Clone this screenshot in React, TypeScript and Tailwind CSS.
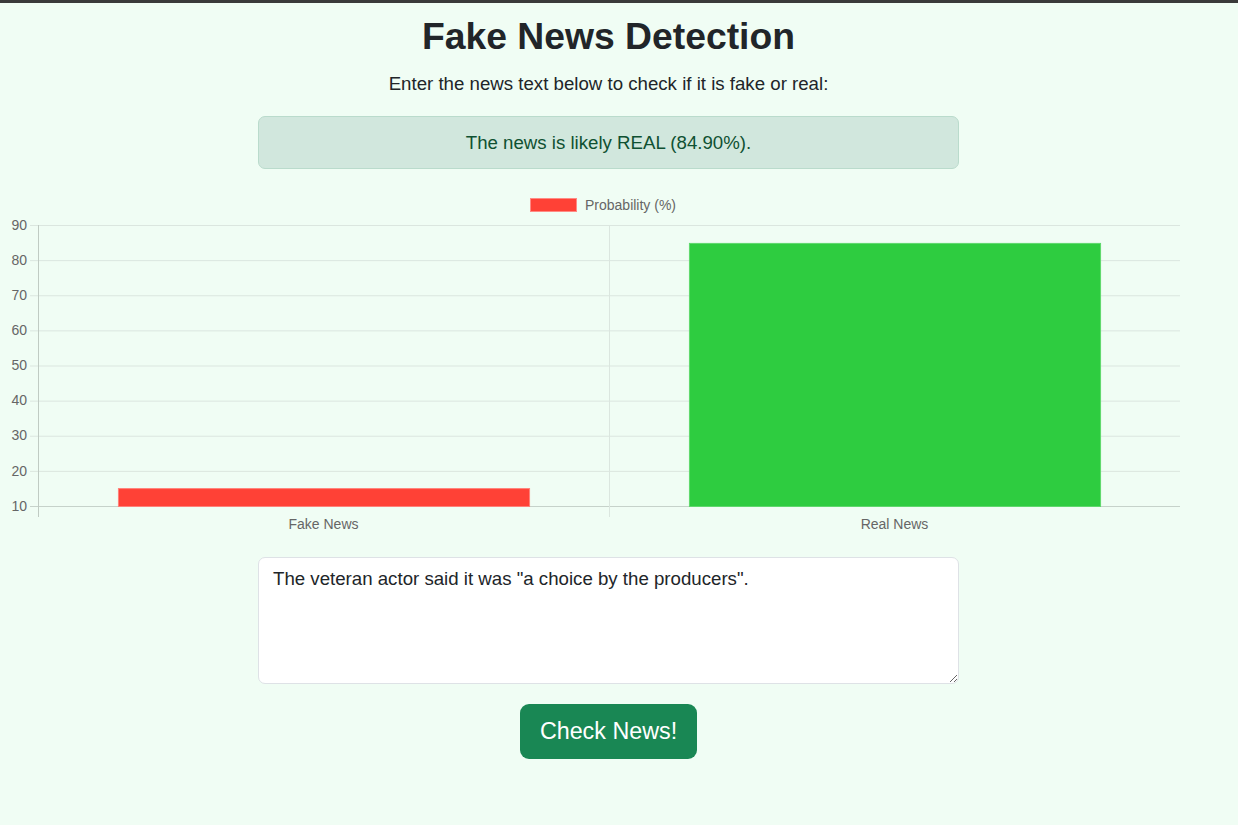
import { useState } from "react";

// chart geometry (px inside the svg)
const left = 38;
const right = 1180;
const top = 35;
const bottom = 316;
const minVal = 10;
const maxVal = 90;

const yFor = (v: number) => bottom - ((v - minVal) / (maxVal - minVal)) * (bottom - top);

const bars = [
  { label: "Fake News", value: 15.1, fill: "#ff4136", stroke: "#ff8079" },
  { label: "Real News", value: 84.9, fill: "#2ecc40", stroke: "#5fd86d" },
];

const ticks = [90, 80, 70, 60, 50, 40, 30, 20, 10];

const ProbabilityChart = () => {
  const slot = (right - left) / bars.length;
  const barWidth = slot * 0.72;

  return (
    <svg
      className="block mt-[21px]"
      width={1217}
      height={350}
      viewBox="0 0 1217 350"
      style={{ fontFamily: '"Liberation Sans", Arial, sans-serif' }}
    >
      {/* legend */}
      <rect x={530.5} y={8.5} width={46} height={13} fill="#ff4136" stroke="#ff8a84" />
      <text x={585} y={16} fontSize={14} fill="#666" dominantBaseline="middle">
        Probability (%)
      </text>

      {/* horizontal grid */}
      {ticks.map((t) => (
        <g key={t}>
          <line
            x1={30}
            x2={right}
            y1={yFor(t) + 0.5}
            y2={yFor(t) + 0.5}
            stroke={t === 10 ? "#c6d2ca" : "#dbe6df"}
            strokeWidth={1}
          />
          <text
            x={27}
            y={yFor(t) + 1}
            fontSize={14}
            fill="#666"
            textAnchor="end"
            dominantBaseline="middle"
          >
            {t}
          </text>
        </g>
      ))}

      {/* vertical grid */}
      <line x1={left + 0.5} x2={left + 0.5} y1={top} y2={bottom + 11} stroke="#c0cbc3" />
      <line x1={609.5} x2={609.5} y1={top} y2={bottom + 11} stroke="#dbe6df" />

      {/* bars */}
      {bars.map((b, i) => {
        const x = left + slot * i + (slot - barWidth) / 2;
        const y = yFor(b.value);
        return (
          <g key={b.label}>
            <rect
              x={x + 0.5}
              y={y + 0.5}
              width={barWidth}
              height={bottom - y}
              fill={b.fill}
              stroke={b.stroke}
              strokeWidth={1}
            />
            <text
              x={left + slot * i + slot / 2}
              y={335}
              fontSize={14}
              fill="#666"
              textAnchor="middle"
              dominantBaseline="middle"
            >
              {b.label}
            </text>
          </g>
        );
      })}
    </svg>
  );
};

const App = () => {
  const [text, setText] = useState('The veteran actor said it was "a choice by the producers".');

  return (
    <div className="min-h-[825px] bg-[#f0fdf4] font-['Liberation_Sans',Arial,sans-serif] text-[#212529]">
      <div className="h-[3px] bg-[#3a3a3a]" />
      <div className="w-[1217px] flex flex-col items-center">
        <h1 className="mt-[11px] text-[37.3px] leading-[1.2] font-bold">Fake News Detection</h1>
        <p className="mt-[11.7px] text-[18.67px] leading-[28px]">
          Enter the news text below to check if it is fake or real:
        </p>

        <div className="mt-[17.8px] w-[701px] rounded-[7px] border border-[#badbcc] bg-[#d1e7dd] py-[11.5px] text-center text-[18.67px] leading-[28px] text-[#0f5132]">
          The news is likely REAL (84.90%).
        </div>

        <ProbabilityChart />

        <textarea
          className="mt-[17px] block h-[127px] w-[701px] rounded-[7px] border border-[#dee2e6] bg-white px-[14px] py-[7px] text-[18.67px] leading-[28px] text-[#212529] outline-none"
          value={text}
          onChange={(e) => setText(e.target.value)}
        />

        <button className="mt-[20px] h-[55px] rounded-[9px] bg-[#198754] px-[20px] text-[23.3px] leading-[35px] text-white">
          Check News!
        </button>
      </div>
    </div>
  );
};

export default App;
